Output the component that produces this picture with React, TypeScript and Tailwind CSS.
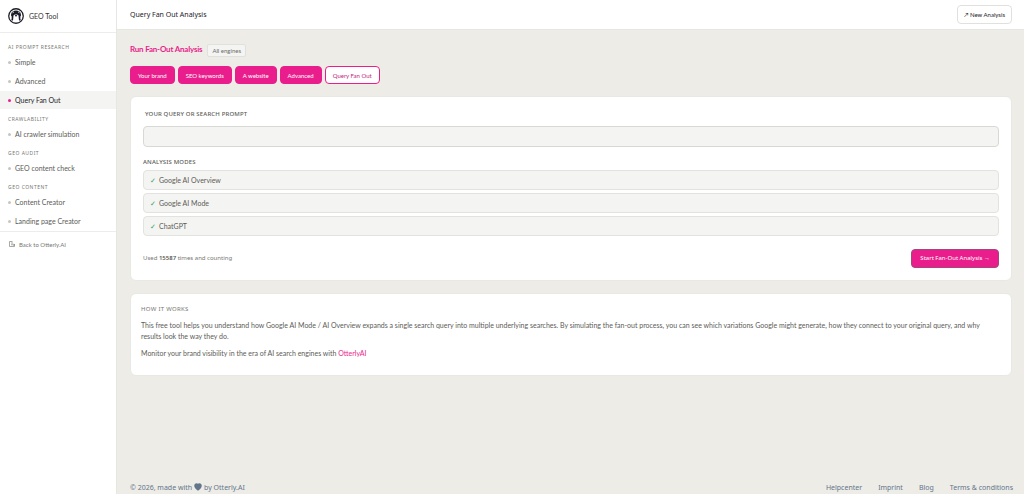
type NavGroup = {
    title: string,
    items: string[],
}

const navGroups: NavGroup[] = [
    { title: "AI Prompt Research", items: ["Simple", "Advanced", "Query Fan Out"] },
    { title: "Crawlability", items: ["AI crawler simulation"] },
    { title: "GEO Audit", items: ["GEO content check"] },
    { title: "GEO Content", items: ["Content Creator", "Landing page Creator"] },
];

const tabs = ["Your brand", "SEO keywords", "A website", "Advanced", "Query Fan Out"];
const modes = ["Google AI Overview", "Google AI Mode", "ChatGPT"];
const footerLinks = ["Helpcenter", "Imprint", "Blog", "Terms & conditions"];
const active = "Query Fan Out";

const OtterLogo = () => (
    <svg viewBox="0 0 32 32" className="size-4 shrink-0" aria-hidden="true">
        <circle cx="16" cy="16" r="14.5" fill="#fff" stroke="#1c1c28" strokeWidth="2.6" />
        <path d="M6 13C7 7 11 5 16 5S25 7 26 13L25 25H7Z" fill="#1c1c28" />
        <path d="M11 15C12 12 20 12 21 15L22 26C19 29 13 29 10 26Z" fill="#fff" />
        <path d="M9 9.500L12 8M23 9.500L20 8" stroke="#fff" strokeWidth="1.500" />
        <path d="M13.500 14H18.500L16 18Z" fill="#1c1c28" />
        <path d="M3.500 16H7V22H5ZM28.500 16H25V22H27Z" fill="#fff" />
    </svg>
);

const BackIcon = () => (
    <svg viewBox="0 0 12 12" className="size-[6px] shrink-0" fill="none" stroke="#8b8b86" strokeWidth="1.500" aria-hidden="true">
        <path d="M7 1H1V11H11V6M4 4H8M4 7.500H11M9 5.500L11 7.500L9 9.500" />
    </svg>
);

const HeartIcon = () => (
    <svg viewBox="0 0 16 16" className="mb-[2px] size-2 shrink-0" fill="#64748b" aria-hidden="true">
        <path d="M8 15.500C3 12 .5 9 .5 5.500C.5 2.500 2.500 .5 5 .5C6.500 .5 7.500 1 8 1.500C8.500 1 9.500 .5 11 .5C13.500 .5 15.500 2.500 15.500 5.500C15.500 9 13 12 8 15.500Z" />
    </svg>
);

const Sidebar = () => (
    <aside className="w-[117px] shrink-0 border-r border-[#e6e6e2] bg-white">
        <div className="flex h-[33px] items-center gap-[5px] border-b border-[#ececea] px-2">
            <OtterLogo />
            <span className="text-[7px] text-[#33332f]">GEO Tool</span>
        </div>
        <nav className="border-b border-[#ececea] pt-[5px]">
            {navGroups.map((group) => (
                <div key={group.title}>
                    <h2 className="h-[15px] px-2 pt-[3px] font-['Noto_Sans',sans-serif] text-[5px] leading-[13px] tracking-widest text-[#777772] uppercase">
                        {group.title}
                    </h2>
                    {group.items.map((item) => (
                        <a
                            key={item}
                            href="#"
                            className={`mb-px flex h-[18px] items-center gap-1 px-2 text-[7px] ${item === active ? "bg-[#f4f4f2] text-[#22221f]" : "text-[#5c5c57]"}`}
                        >
                            <span className={`size-[3px] rounded-full ${item === active ? "bg-[#e91e8c]" : "bg-[#c6c6c1]"}`} />
                            {item}
                        </a>
                    ))}
                </div>
            ))}
        </nav>
        <a href="#" className="mt-[3px] flex h-[18px] items-center gap-1 px-[9px] text-[6px] text-[#777772]">
            <BackIcon />
            Back to Otterly.AI
        </a>
    </aside>
);

const App = () => {
    return (
        <div className="flex min-h-screen bg-[#edece7] font-['Lato','Noto_Sans',sans-serif]">
            <Sidebar />
            <div className="flex min-w-0 flex-1 flex-col">
                <header className="flex h-[30px] items-center justify-between border-b border-[#e6e6e2] bg-white pr-3 pl-[13px]">
                    <h1 className="pt-px font-['Noto_Sans',sans-serif] text-[7px] text-[#22221f]">Query Fan Out Analysis</h1>
                    <button className="h-[19px] rounded-[4px] border border-[#e0e0dc] px-[6px] text-[6px] text-[#22221f]">
                        ↗ New Analysis
                    </button>
                </header>

                <main className="pt-[13px] pr-3 pl-[13px]">
                    <div className="flex h-[13px] items-center gap-[5px]">
                        <h2 className="text-[8px] leading-[11px] font-bold tracking-tight text-[#e91e8c]">Run Fan-Out Analysis</h2>
                        <span className="mt-[2px] flex h-[13px] items-center rounded-[2px] border border-[#e0e0dc] bg-[#f4f4f2] px-1 text-[6px] text-[#6b6b66]">
                            All engines
                        </span>
                    </div>

                    <div className="mt-[10px] flex gap-[3px]">
                        {tabs.map((tab) => (
                            <button
                                key={tab}
                                className={`h-[18px] rounded-[4px] border border-[#e91e8c] px-[7px] text-[6px] ${tab === active ? "bg-white text-[#c4247c]" : "bg-[#e91e8c] text-white"}`}
                            >
                                {tab}
                            </button>
                        ))}
                    </div>

                    <form className="mt-3 rounded-[6px] border border-[#e8e8e4] bg-white p-3" onSubmit={(e) => e.preventDefault()}>
                        <label htmlFor="query" className="block px-[2px] font-['Noto_Sans',sans-serif] text-[6px] leading-[10px] font-medium tracking-wide text-[#5c5c57] uppercase">
                            Your query or search prompt
                        </label>
                        <input
                            id="query"
                            className="mt-[7px] block h-[21px] w-full rounded-[4px] border border-[#d8d8d4] bg-[#f4f4f2] px-2 text-[7px]"
                        />
                        <h3 className="mt-[10px] font-['Noto_Sans',sans-serif] text-[6px] leading-[10px] font-medium tracking-wide text-[#5c5c57] uppercase">
                            Analysis modes
                        </h3>
                        <ul className="mt-[3px] flex flex-col gap-[3px]">
                            {modes.map((mode) => (
                                <li key={mode} className="flex h-5 items-center gap-[3px] rounded-[4px] border border-[#e2e2de] bg-[#f4f4f2] px-[6px] text-[7px] text-[#5c5c57]">
                                    <span className="text-[#2fa36b]">✓</span>
                                    {mode}
                                </li>
                            ))}
                        </ul>
                        <div className="mt-[13px] flex items-center justify-between font-['Noto_Sans',sans-serif] text-[6px]">
                            <p className="text-[#777772]">
                                Used <strong className="font-semibold text-[#5c5c57]">15587</strong> times and counting
                            </p>
                            <button className="h-[19px] rounded-[4px] border border-[#a3467a] bg-[#e91e8c] px-2 text-white">
                                Start Fan-Out Analysis →
                            </button>
                        </div>
                    </form>

                    <section className="mt-3 rounded-[6px] border border-[#e8e8e4] bg-white px-[10px] pt-[10px] pb-4 text-[7px] leading-[11px] text-[#5c5c57]">
                        <h3 className="font-['Noto_Sans',sans-serif] text-[6px] leading-[10px] tracking-wider text-[#777772] uppercase">How it works</h3>
                        <p className="mt-[6px]">
                            This free tool helps you understand how Google AI Mode / AI Overview expands a single search query into multiple
                            underlying searches. By simulating the fan-out process, you can see which variations Google might generate, how they
                            connect to your original query, and why results look the way they do.
                        </p>
                        <p className="mt-[6px]">
                            Monitor your brand visibility in the era of AI search engines with{" "}
                            <a href="#" className="text-[#e91e8c]">OtterlyAI</a>
                        </p>
                    </section>
                </main>

                <footer className="mt-auto flex h-3 items-center justify-between pr-[11px] pl-[13px] font-['Noto_Sans',sans-serif] text-[7px] text-[#64748b]">
                    <p className="flex items-center gap-[2px]">
                        © 2026, made with <HeartIcon /> by Otterly.AI
                    </p>
                    <div className="flex gap-4">
                        {footerLinks.map((link) => (
                            <a key={link} href="#">{link}</a>
                        ))}
                    </div>
                </footer>
            </div>
        </div>
    );
};

export default App;
